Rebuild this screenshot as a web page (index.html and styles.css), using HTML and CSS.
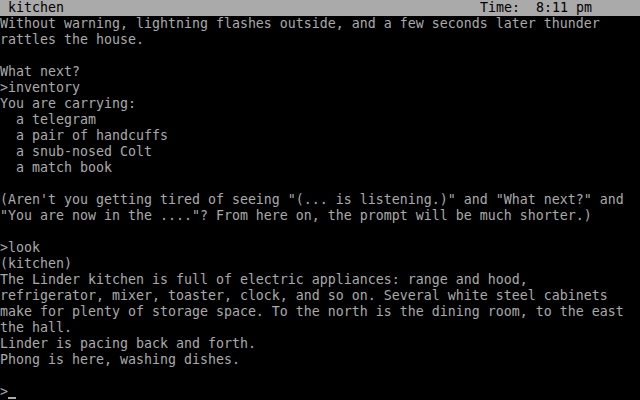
FILE: index.html
```html
<!DOCTYPE html>
<html>
<head>
    <link rel="stylesheet" href="styles.css">
</head>
<body>
    <div class="screen">
        <div class="status">
            <span class="room">kitchen</span>
            <span class="clock">Time:  8:11 pm</span>
        </div>
        <pre class="transcript">Without warning, lightning flashes outside, and a few seconds later thunder
rattles the house.

What next?
&gt;inventory
You are carrying:
  a telegram
  a pair of handcuffs
  a snub-nosed Colt
  a match book

(Aren't you getting tired of seeing "(... is listening.)" and "What next?" and
"You are now in the ...."? From here on, the prompt will be much shorter.)

&gt;look
(kitchen)
The Linder kitchen is full of electric appliances: range and hood,
refrigerator, mixer, toaster, clock, and so on. Several white steel cabinets
make for plenty of storage space. To the north is the dining room, to the east
the hall.
Linder is pacing back and forth.
Phong is here, washing dishes.

&gt;<span class="cursor"></span></pre>
    </div>
</body>
</html>
```

FILE: styles.css
```css
body {
    margin: 0;
    background-color: #000;
}

.screen {
    width: 640px;
    height: 400px;
    overflow: hidden;
    font-family: "DejaVu Sans Mono", "Liberation Mono", monospace;
    font-size: 13.29px;
    line-height: 16px;
    color: #aaaaaa;
}

.status {
    display: flex;
    justify-content: space-between;
    height: 16px;
    padding: 0 48px 0 8px;
    background-color: #aaaaaa;
    color: #000;
    white-space: pre;
}

.transcript {
    margin: 0;
    font: inherit;
    white-space: pre;
}

.cursor {
    display: inline-block;
    width: 8px;
    height: 2px;
    background-color: #aaaaaa;
    vertical-align: -3px;
}
```
